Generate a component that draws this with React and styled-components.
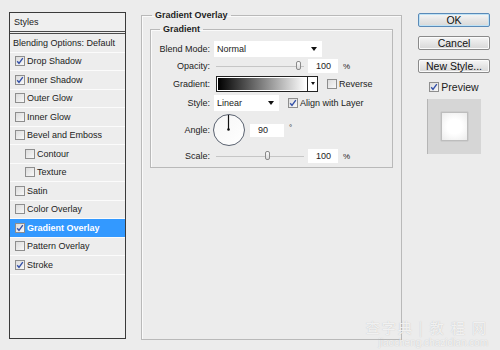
import React from "react";
import styled, { createGlobalStyle } from "styled-components";

const GlobalStyle = createGlobalStyle`
  html, body {
    margin: 0;
    padding: 0;
    background: #ececec;
  }
  body {
    font-family: "Liberation Sans", Arial, sans-serif;
    font-size: 9px;
    color: #222;
  }
`;

const Page = styled.div`
  position: relative;
  width: 500px;
  height: 350px;
  box-sizing: border-box;
  padding: 10px 0 0 9px;
  display: flex;
  align-items: flex-start;
  overflow: hidden;
`;

/* ---------- left styles list ---------- */

const StylesPanel = styled.div`
  margin-top: 2px;
  width: 117px;
  height: 327px;
  box-sizing: border-box;
  border: 1px solid #3a3a3a;
  background: #efefef;
  display: flex;
  flex-direction: column;
`;

const PanelHead = styled.div`
  height: 18px;
  display: flex;
  align-items: center;
  padding-left: 4px;
  border-bottom: 3px double #4a4a4a;
`;

const StyleRow = styled.div`
  height: 18.5px;
  box-sizing: border-box;
  display: flex;
  align-items: center;
  gap: 2px;
  padding-left: ${(p) => (p.$indent ? 15 : p.$plain ? 3 : 5)}px;
  border-bottom: 1px solid #fbfbfb;
  background: ${(p) => (p.$active ? "#3399ff" : "#ededed")};
  color: ${(p) => (p.$active ? "#fff" : "#222")};
  font-weight: ${(p) => (p.$active ? "bold" : "normal")};
`;

const Box = styled.span`
  width: 10px;
  height: 10px;
  box-sizing: border-box;
  flex: none;
  border: 1px solid #8e8e8e;
  background: linear-gradient(135deg, #dcdcdc, #f8f8f8);
  display: flex;
  align-items: center;
  justify-content: center;
`;

function Check({ on }) {
  return (
    <Box>
      {on && (
        <svg width="8" height="8" viewBox="0 0 8 8">
          <path d="M1.2 4.2 L3 6.4 L6.8 1.2" fill="none" stroke="#3350a8" strokeWidth="1.4" />
        </svg>
      )}
    </Box>
  );
}

/* ---------- middle fieldsets ---------- */

const Outer = styled.fieldset`
  margin: 0 0 0 15px;
  width: 261px;
  height: 330px;
  box-sizing: border-box;
  padding: 0 8px 0 8px;
  border: 1px solid #b9b9b9;
  box-shadow: inset 1px 1px 0 #fafafa;
`;

const Legend = styled.legend`
  font-weight: bold;
  font-size: 9px;
  color: #1e1e1e;
  padding: 0 3px;
  margin-left: ${(p) => p.$ml}px;
  line-height: 11px;
`;

const Inner = styled.fieldset`
  margin: 3px 0 0 0;
  width: 243px;
  box-sizing: border-box;
  padding: 5px 0 3px 0;
  border: 1px solid #b9b9b9;
  box-shadow: inset 1px 1px 0 #fafafa;
  display: flex;
  flex-direction: column;
  gap: 1px;
`;

const Row = styled.div`
  height: ${(p) => p.$h}px;
  display: flex;
  align-items: center;
`;

const Label = styled.span`
  width: 59px;
  flex: none;
  text-align: right;
  margin-right: ${(p) => p.$mr ?? 5}px;
`;

const Select = styled.div`
  width: ${(p) => p.$w}px;
  height: 16px;
  box-sizing: border-box;
  background: #fff;
  display: flex;
  align-items: center;
  justify-content: space-between;
  padding: 0 5px 0 3px;
  font-size: 9px;
`;

const Arrow = styled.span`
  width: 0;
  height: 0;
  border-left: 3.5px solid transparent;
  border-right: 3.5px solid transparent;
  border-top: 4px solid #111;
`;

const Slider = styled.div`
  position: relative;
  width: 88px;
  height: 12px;
  margin-left: 1px;
  flex: none;
  &::before {
    content: "";
    position: absolute;
    left: 0;
    right: 0;
    top: 6px;
    border-top: 1px solid #c6c6c6;
  }
`;

const Thumb = styled.span`
  position: absolute;
  top: 1px;
  width: 5px;
  height: 9px;
  box-sizing: border-box;
  border: 1px solid #8a8a8a;
  border-radius: 2px;
  background: linear-gradient(#fbfbfb, #d9d9d9);
`;

const NumField = styled.div`
  width: ${(p) => p.$w}px;
  height: ${(p) => p.$hh || 14}px;
  margin-left: ${(p) => p.$ml}px;
  box-sizing: border-box;
  background: #fff;
  display: flex;
  align-items: center;
  padding-left: 8px;
  flex: none;
`;

const Unit = styled.span`
  margin-left: 5px;
  font-size: 8px;
  align-self: ${(p) => (p.$top ? "flex-start" : "center")};
  margin-top: ${(p) => (p.$top ? 10 : 0)}px;
`;

const GradBox = styled.div`
  margin-left: 1px;
  width: 102px;
  height: 16px;
  box-sizing: border-box;
  border: 1px solid #222;
  display: flex;
  background: #fff;
`;

const GradFill = styled.div`
  flex: 1;
  margin: 1px;
  background: linear-gradient(to right, #000, #fff);
`;

const GradArrow = styled.div`
  width: 9px;
  border-left: 1px solid #222;
  display: flex;
  align-items: center;
  justify-content: center;
  &::after {
    content: "";
    border-left: 2.5px solid transparent;
    border-right: 2.5px solid transparent;
    border-top: 3px solid #111;
  }
`;

const CheckLabel = styled.label`
  display: flex;
  align-items: center;
  gap: 2px;
  margin-left: ${(p) => p.$ml}px;
  font-size: ${(p) => p.$fs || 9}px;
`;

const Dial = styled.div`
  position: relative;
  width: 32px;
  height: 32px;
  box-sizing: border-box;
  margin-left: -2px;
  border: 1.5px solid #5a6270;
  border-radius: 50%;
  background: linear-gradient(135deg, #f6f6f6, #ffffff);
  flex: none;
`;

/* ---------- right column ---------- */

const Side = styled.div`
  margin-left: 16px;
  margin-top: 3px;
  width: 72px;
  display: flex;
  flex-direction: column;
  align-items: center;
`;

const Button = styled.button`
  width: 72px;
  height: 14px;
  margin-bottom: ${(p) => p.$mb}px;
  padding: 0;
  box-sizing: border-box;
  border: 1px solid ${(p) => (p.$default ? "#5a8ab8" : "#8a8a8a")};
  border-radius: 2px;
  background: linear-gradient(#f6f6f6 0%, #e6e6e6 50%, #d8d8d8 100%);
  box-shadow: ${(p) => (p.$default ? "inset 0 0 0 1px #bfe2f5" : "inset 0 0 0 1px #fbfbfb")};
  font-family: "Liberation Sans", Arial, sans-serif;
  font-size: 10.5px;
  line-height: 12px;
  color: #111;
`;

const PreviewBox = styled.div`
  margin-top: 6px;
  width: 54px;
  height: 55px;
  box-sizing: border-box;
  border-left: 1px solid #b5b5b5;
  background: #d6d6d6;
  display: flex;
  align-items: center;
  justify-content: center;
`;

const PreviewSquare = styled.div`
  width: 27px;
  height: 29px;
  box-sizing: border-box;
  border: 1px solid #bdbdbd;
  background: radial-gradient(circle at 50% 50%, #ffffff 40%, #ececec 100%);
  box-shadow: 0 0 1px #999;
`;

const Watermark = styled.div`
  position: absolute;
  right: 12px;
  top: 318px;
  display: flex;
  flex-direction: column;
  align-items: flex-end;
  color: rgba(255, 255, 255, 0.8);
  text-shadow: 0 0 1px rgba(150, 150, 150, 0.6);
  font-family: "Noto Sans CJK SC", sans-serif;
  pointer-events: none;
`;

const WmTop = styled.div`
  font-size: 14px;
  height: 19px;
  line-height: 19px;
  letter-spacing: 2px;
`;

const WmBottom = styled.div`
  font-family: "Liberation Sans", Arial, sans-serif;
  font-size: 10px;
  height: 12px;
  line-height: 12px;
`;

const styleItems = [
  { name: "Drop Shadow", on: true },
  { name: "Inner Shadow", on: true },
  { name: "Outer Glow" },
  { name: "Inner Glow" },
  { name: "Bevel and Emboss" },
  { name: "Contour", indent: true },
  { name: "Texture", indent: true },
  { name: "Satin" },
  { name: "Color Overlay" },
  { name: "Gradient Overlay", on: true, active: true },
  { name: "Pattern Overlay" },
  { name: "Stroke", on: true },
];

export default function App() {
  return (
    <Page>
      <GlobalStyle />
      <StylesPanel>
        <PanelHead>Styles</PanelHead>
        <StyleRow $plain>Blending Options: Default</StyleRow>
        {styleItems.map((s) => (
          <StyleRow key={s.name} $indent={s.indent} $active={s.active}>
            <Check on={s.on} />
            <span>{s.name}</span>
          </StyleRow>
        ))}
      </StylesPanel>

      <Outer>
        <Legend $ml={2}>Gradient Overlay</Legend>
        <Inner>
          <Legend $ml={9}>Gradient</Legend>
          <Row $h={17}>
            <Label $mr={4}>Blend Mode:</Label>
            <Select $w={108}>
              <span>Normal</span>
              <Arrow />
            </Select>
          </Row>
          <Row $h={16}>
            <Label>Opacity:</Label>
            <Slider>
              <Thumb style={{ left: "80px" }} />
            </Slider>
            <NumField $w={30} $ml={4}>100</NumField>
            <Unit>%</Unit>
          </Row>
          <Row $h={17}>
            <Label>Gradient:</Label>
            <GradBox>
              <GradFill />
              <GradArrow />
            </GradBox>
            <CheckLabel $ml={9}>
              <Check />
              Reverse
            </CheckLabel>
          </Row>
          <Row $h={19}>
            <Label $mr={4}>Style:</Label>
            <Select $w={65}>
              <span>Linear</span>
              <Arrow />
            </Select>
            <CheckLabel $ml={9}>
              <Check on />
              Align with Layer
            </CheckLabel>
          </Row>
          <Row $h={34}>
            <Label>Angle:</Label>
            <Dial>
              <svg width="29" height="29" viewBox="0 0 29 29" style={{ position: "absolute", left: 0, top: 0 }}>
                <line x1="14.5" y1="0" x2="14.5" y2="14.5" stroke="#111" strokeWidth="1.2" />
                <circle cx="14.5" cy="14.5" r="1.3" fill="#111" />
              </svg>
            </Dial>
            <NumField $w={34} $ml={5} $hh={13}>90</NumField>
            <Unit $top>°</Unit>
          </Row>
          <Row $h={16}>
            <Label>Scale:</Label>
            <Slider>
              <Thumb style={{ left: "49px" }} />
            </Slider>
            <NumField $w={30} $ml={4}>100</NumField>
            <Unit>%</Unit>
          </Row>
        </Inner>
      </Outer>

      <Side>
        <Button $default $mb={9}>OK</Button>
        <Button $mb={9}>Cancel</Button>
        <Button $mb={8}>New Style...</Button>
        <CheckLabel $ml={0} $fs={10.5}>
          <Check on />
          Preview
        </CheckLabel>
        <PreviewBox>
          <PreviewSquare />
        </PreviewBox>
      </Side>

      <Watermark>
        <WmTop>查字典 | 教 程 网</WmTop>
        <WmBottom>jiaocheng.chazidian.com</WmBottom>
      </Watermark>
    </Page>
  );
}
